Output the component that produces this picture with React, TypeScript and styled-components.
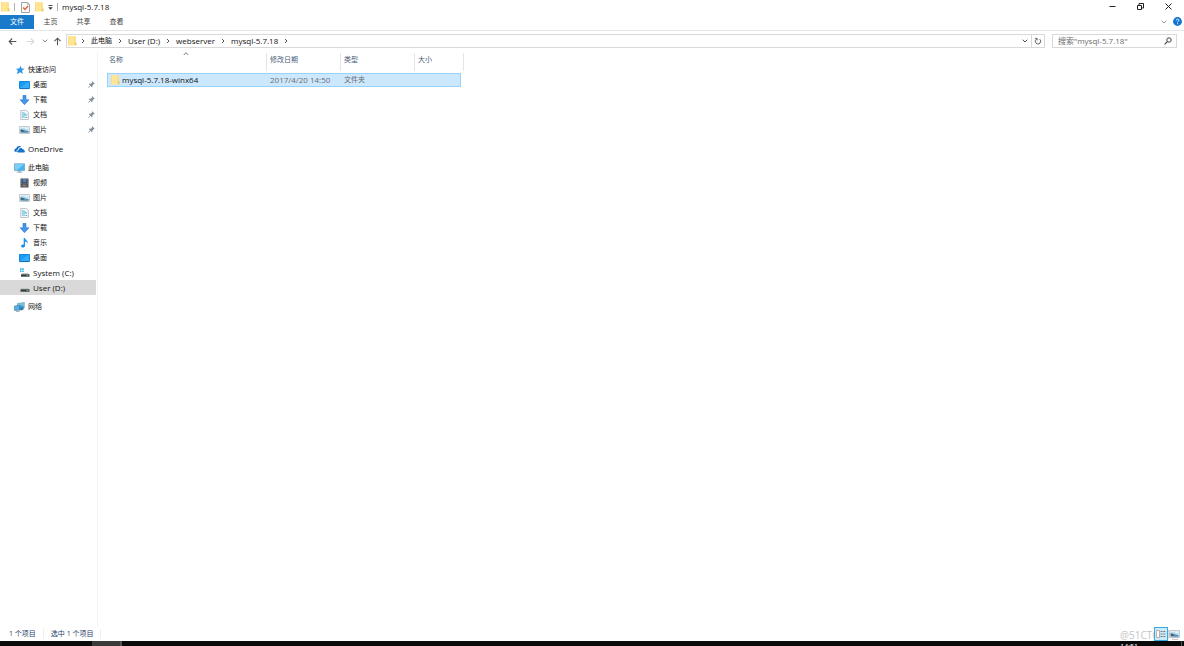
import React from "react";
import styled, { createGlobalStyle, css } from "styled-components";

const GlobalStyle = createGlobalStyle`
  *, *::before, *::after { box-sizing: border-box; }
  body { margin: 0; background: #fff; }
  button, input { font: inherit; color: inherit; }
  svg { display: block; flex: none; }
`;

const Window = styled.div`
  display: flex;
  flex-direction: column;
  min-height: 100vh;
  overflow: hidden;
  background: #fff;
  color: #111;
  font: 7px/14px "Open Sans", "Noto Sans CJK SC", sans-serif;
`;

const PlainButton = styled.button`
  display: flex;
  align-items: center;
  justify-content: center;
  padding: 0;
  border: 0;
  background: none;
  white-space: nowrap;
`;

/* Title bar */
const TitleBar = styled.header`
  display: flex;
  justify-content: space-between;
  height: 14px;
`;

const QuickTools = styled.div`
  display: flex;
  align-items: center;
`;

const ToolButton = styled(PlainButton)<{ $width: number }>`
  width: ${(p) => p.$width}px;
  height: 14px;
`;

const Separator = styled.span`
  width: 1px;
  height: 8px;
  background: #b0b0b0;
`;

const WindowTitle = styled.h1`
  margin: 0 0 0 4px;
  font-size: 8px;
  font-weight: 400;
  line-height: 14px;
`;

const CaptionButtons = styled.div`
  display: flex;
  padding-right: 2px;
`;

const CaptionButton = styled(PlainButton)`
  width: 28px;
  height: 13px;
`;

/* Ribbon tabs */
const Ribbon = styled.nav`
  display: flex;
  align-items: center;
  height: 17px;
  padding-bottom: 1px;
  border-bottom: 1px solid #e6e6e6;
`;

const Tab = styled(PlainButton)<{ $active?: boolean }>`
  width: 33px;
  height: 14px;
  color: #444;
  ${(p) =>
    p.$active &&
    css`
      width: 34px;
      background: #1979ca;
      color: #fff;
    `}
`;

const RibbonEnd = styled.div`
  display: flex;
  align-items: center;
  gap: 6px;
  margin-left: auto;
  padding-right: 2px;
`;

/* Address row */
const AddressRow = styled.div`
  display: flex;
  align-items: center;
  height: 20px;
  padding: 0 7px 0 4px;
`;

const AddressBox = styled.div`
  display: flex;
  flex: 1;
  align-items: center;
  height: 14px;
  margin: 0 7px 0 1px;
  padding-left: 1px;
  border: 1px solid #d9d9d9;
`;

const Crumbs = styled.ol`
  display: flex;
  flex: 1;
  align-items: center;
  margin: 0;
  padding: 0 0 0 3px;
  list-style: none;
`;

const Crumb = styled.li`
  display: flex;
  align-items: center;
  gap: 5px;
  margin-right: 5px;
`;

const CrumbLink = styled.a<{ $latin: boolean }>`
  color: #111;
  font-size: ${(p) => (p.$latin ? 8 : 7)}px;
  text-decoration: none;
`;

const RefreshButton = styled(PlainButton)`
  width: 13px;
  height: 12px;
  border-left: 1px solid #d9d9d9;
`;

const SearchForm = styled.form`
  display: flex;
  align-items: center;
  width: 125px;
  height: 14px;
  padding: 0 4px 0 5px;
  border: 1px solid #d9d9d9;
`;

const SearchInput = styled.input`
  flex: 1;
  min-width: 0;
  height: 12px;
  padding: 0;
  border: 0;
  outline: 0;
  background: none;
  font-size: 8px;
  &::placeholder { color: #6d6d6d; opacity: 1; }
`;

/* Body */
const Body = styled.div`
  display: flex;
  flex: 1;
`;

const Sidebar = styled.aside`
  width: 98px;
  padding: 11px 1px 0 0;
  border-right: 1px solid #f5f5f5;
`;

const TreeGroup = styled.ul`
  margin: 0 0 4px;
  padding: 0;
  list-style: none;
`;

const TreeItem = styled.a<{ $child?: boolean; $selected?: boolean; $latin?: boolean }>`
  display: flex;
  align-items: center;
  gap: 3px;
  height: 15px;
  padding: 0 0 0 ${(p) => (p.$child ? 19 : 14)}px;
  background: ${(p) => (p.$selected ? "#d9d9d9" : "transparent")};
  color: #111;
  font-size: ${(p) => (p.$latin ? 8 : 7)}px;
  text-decoration: none;
  white-space: nowrap;
`;

const PinSlot = styled.span`
  margin-left: auto;
  padding-right: 1px;
`;

const Content = styled.main`
  flex: 1;
  padding-left: 9px;
`;

const FileTable = styled.table`
  width: 357px;
  table-layout: fixed;
  border-collapse: separate;
  border-spacing: 0 2px;
`;

const Column = styled.col<{ $width: number }>`
  width: ${(p) => p.$width}px;
`;

const HeadCell = styled.th`
  position: relative;
  height: 18px;
  padding: 0 0 0 3px;
  border-right: 1px solid #e5e5e5;
  color: #4c607a;
  font-weight: 400;
  line-height: 14px;
  text-align: left;
  vertical-align: top;
  &:first-child { padding-left: 2px; }
`;

const SortMark = styled.span`
  position: absolute;
  top: -2px;
  left: 0;
  right: 2px;
  display: flex;
  justify-content: center;
`;

const Cell = styled.td`
  height: 14px;
  padding: 0 0 0 3px;
  border: solid #99d1ff;
  border-width: 1px 0;
  background: #cce8ff;
  color: #6d6d6d;
  line-height: 12px;
  white-space: nowrap;
  &:first-child { border-left-width: 1px; }
  &:last-child { border-right-width: 1px; }
`;

const DateText = styled.time`
  display: block;
  font-size: 8px;
`;

const FileName = styled.span`
  display: flex;
  align-items: center;
  gap: 2px;
  color: #111;
  font-size: 8px;
`;

/* Status bar */
const StatusBar = styled.footer`
  display: flex;
  align-items: center;
  height: 14px;
  padding: 0 4px 0 9px;
  color: #26406b;
`;

const StatusText = styled.span`
  padding-right: 7px;
  margin-right: 7px;
  border-right: 1px solid #eee;
  line-height: 10px;
`;

const ViewSwitch = styled.div`
  position: relative;
  display: flex;
  gap: 1px;
  margin-left: auto;
`;

const ViewButton = styled(PlainButton)<{ $active?: boolean }>`
  position: relative;
  width: ${(p) => (p.$active ? 14 : 11)}px;
  height: 14px;
  border: ${(p) => (p.$active ? "1px solid #3aa7df" : "0")};
  background: ${(p) => (p.$active ? "#cdeaf8" : "none")};
`;

const Watermark = styled.span`
  position: absolute;
  right: 0;
  top: 1px;
  color: #c4c4c4;
  font: 10px/14px "Open Sans", "Noto Sans CJK SC", sans-serif;
  white-space: nowrap;
`;

const Taskbar = styled.div`
  display: flex;
  height: 5px;
  padding: 0 2px 0 92px;
  overflow: hidden;
  background: #0a0a0a;
`;

const TaskButton = styled(PlainButton)`
  width: 30px;
  height: 5px;
  border-right: 2px solid #555;
  background: #3a3a3a;
`;

const Clock = styled.time`
  margin-left: auto;
  padding: 0 43px 0 0;
  border-right: 1px solid #555;
  color: #fff;
  line-height: 11px;
`;

/* Drawings */
const FolderIcon = () => (
  <svg width="9" height="10" viewBox="0 0 9 10">
    <path d="M0 0h6.500l1 1v8.500H0z" fill="#ffe594" />
    <path d="M6.500.5h1.200v6L6.500 9z" fill="#f8d97c" />
    <path d="M6.800 6.500h1.700v2.800H6.800z" fill="#efc75d" />
    <path d="M0 0v9.500" stroke="#f4d375" />
  </svg>
);

const PropertiesIcon = () => (
  <svg width="9" height="11" viewBox="0 0 9 11" fill="none">
    <path d="M.5.5h6l2 2v8h-8z" fill="#fafafa" stroke="#a2a2a2" />
    <path d="M6.500.5v2h2" stroke="#a2a2a2" strokeWidth=".7" />
    <path d="M2.200 5.500l1.700 2L7 4" stroke="#e0602f" strokeWidth="1.300" />
  </svg>
);

const CustomizeIcon = () => (
  <svg width="5" height="6" viewBox="0 0 5 6">
    <path d="M.5 1.500h4" stroke="#333" strokeWidth=".9" />
    <path d="M.3 3.300h4.400L2.500 5.700z" fill="#333" />
  </svg>
);

type ChevronDir = "down" | "up" | "right";
const chevrons: Record<ChevronDir, string> = {
  down: "M.7 1.700L3 4l2.300-2.300",
  up: "M.7 4L3 1.700 5.300 4",
  right: "M2 1l2 2-2 2",
};
const Chevron = ({ dir, color = "#555" }: { dir: ChevronDir; color?: string }) => (
  <svg width="6" height="6" viewBox="0 0 6 6" fill="none">
    <path d={chevrons[dir]} stroke={color} strokeWidth="1" />
  </svg>
);

const Arrow = ({ dir, color = "#555" }: { dir: "left" | "right" | "up"; color?: string }) => (
  <svg width="9" height="9" viewBox="0 0 9 9" fill="none">
    <path
      d="M8.300 4.500H1.200M4.200 1.500l-3 3 3 3"
      stroke={color}
      strokeWidth="1.100"
      transform={dir === "left" ? undefined : `rotate(${dir === "up" ? 90 : 180} 4.500 4.500)`}
    />
  </svg>
);

const MinimizeIcon = () => (
  <svg width="7" height="7" viewBox="0 0 7 7"><path d="M.5 3.500h6" stroke="#222" /></svg>
);
const RestoreIcon = () => (
  <svg width="7" height="7" viewBox="0 0 7 7" fill="none" stroke="#222">
    <path d="M.5 2.500h4v4h-4z" />
    <path d="M2 2V.5h4.500V5H5" />
  </svg>
);
const CloseIcon = () => (
  <svg width="7" height="7" viewBox="0 0 7 7"><path d="M.5.5l6 6M6.500.5l-6 6" stroke="#222" /></svg>
);

const HelpIcon = () => (
  <svg width="9" height="9" viewBox="0 0 9 9" fill="none">
    <circle cx="4.500" cy="4.500" r="4.400" fill="#0f73cf" />
    <path d="M3.200 3.500c0-1.900 2.700-1.700 2.700-.2 0 1-1.300 1-1.300 2.100" stroke="#fff" strokeWidth=".9" />
    <path d="M4.100 6.300h1v.9h-1z" fill="#fff" />
  </svg>
);

const RefreshIcon = () => (
  <svg width="8" height="8" viewBox="0 0 8 8" fill="none" stroke="#555" strokeWidth=".9">
    <path d="M5.600 2.100A2.700 2.700 0 1 1 2.600 2" />
    <path d="M1.200 1.400h2v2" />
  </svg>
);

const SearchIcon = () => (
  <svg width="8" height="8" viewBox="0 0 8 8" fill="none" stroke="#444">
    <circle cx="5" cy="3" r="2.200" />
    <path d="M3.400 4.600L.6 7.400" strokeWidth="1.200" />
  </svg>
);

const PinIcon = () => (
  <svg width="7" height="7" viewBox="0 0 7 7">
    <path d="M4.200.3l2.500 2.500-.7.500-.4-.1-1.200 1.300.1 1.300-.6.500L.9 3.200l.6-.6 1.400.1L4 1.400 3.800.8z" fill="#838d97" />
    <path d="M2.500 4.500L.4 6.700" stroke="#838d97" strokeWidth=".8" />
  </svg>
);

type IconName =
  | "star" | "desktop" | "download" | "document" | "picture" | "cloud"
  | "computer" | "video" | "music" | "system" | "drive" | "network";

const drawings: Record<IconName, React.ReactNode> = {
  star: (
    <path d="M6.900.8l.6 2.600 3.200.3-2.600 1.900.7 3.300-2.500-1.600-3.500 2 1.100-3.700L2 3.700l3.100-.3z" fill="#2e97e5" />
  ),
  desktop: (
    <>
      <path d="M.5 1.500h10v7H.5z" fill="#189cf4" stroke="#1488dc" />
      <path d="M1 8l8-6h1v6z" fill="#36adfa" />
      <path d="M1 8.600h9" stroke="#1468ae" strokeWidth=".7" />
    </>
  ),
  download: (
    <path d="M4 .3h3v4.500h3L5.500 9.700 1 4.800h3z" fill="#4596e6" stroke="#2b7bca" strokeWidth=".6" />
  ),
  document: (
    <>
      <path d="M1.800.4h5.500l2 2v7.200H1.800z" fill="#f5f9fb" stroke="#a0a9ae" strokeWidth=".7" />
      <path d="M3 3h2.500M3 5h2M6.500 5H8M3 7h3M6.500 7.500H8" stroke="#4eacd5" />
      <path d="M5 3.500h2v2H5z" fill="#70c7e7" />
    </>
  ),
  picture: (
    <>
      <path d="M.5 1.500h10v7H.5z" fill="#fff" stroke="#b7bcc0" strokeWidth=".8" />
      <path d="M1.500 2.500h8v5h-8z" fill="#b5dcf3" />
      <path d="M1.500 4.300c2 0 3 1.200 4.500 1.200l3.500.8v1.200h-8z" fill="#41687c" />
      <path d="M5 6.300h4.500v1.200H4z" fill="#5aa0cc" />
      <path d="M6.500 3h2v1h-2z" fill="#fff" />
    </>
  ),
  cloud: (
    <>
      <path d="M.6 7.500C-.2 5.500 1.500 4.600 2.300 4.600 2.600 2 5.600.9 7.500 3 5 2.800 4 4.300 3.900 5.500 2.500 5.700 2.300 7 2.800 7.900z" fill="#0f68bd" />
      <path d="M4 8.500C2.600 8.300 2.900 6.200 4.600 6.300 4.700 3.800 7.900 3.300 8.600 5.300c1.700-.1 1.900 1.200 1.700 1.500 1 .4.700 1.700-.3 1.700z" fill="#1274ce" />
    </>
  ),
  computer: (
    <>
      <path d="M.5.800h10v6.700H.5z" fill="#45b5f3" stroke="#6f9cb8" strokeWidth=".7" />
      <path d="M1 1.300h9L3 7H1z" fill="#7bd0fa" />
      <path d="M4.500 7.800h2v1h-2zM2.500 8.800h6v.7h-6z" fill="#7fa5bb" />
    </>
  ),
  video: (
    <>
      <path d="M1.500.5h8v9h-8z" fill="#3b4048" />
      <path d="M3.500 1h4v3.500h-4z" fill="#5a82ae" />
      <path d="M3.500 5.300h4V9h-4z" fill="#8a6f52" />
      <path d="M3.500 3h2v1.500h-2zM5.500 5.300h2V7h-2z" fill="#3c67b2" />
      <path d="M2.300.8v9M8.700.8v9" stroke="#b9bdc2" strokeWidth=".7" strokeDasharray="1 1" />
    </>
  ),
  music: (
    <>
      <path d="M5.300 0v8" stroke="#118ae5" strokeWidth="1.200" />
      <path d="M5 0h1c.2 2 3 2.500 2.800 5.800C8.200 4 7 3.600 5.500 3.400z" fill="#1593ee" />
      <ellipse cx="4" cy="8" rx="1.900" ry="1.500" fill="#118ae5" />
    </>
  ),
  system: (
    <>
      <path d="M1 .3h1.600v1.600H1zM3.200.3h1.600v1.600H3.200zM1 2.500h1.600v1.600H1zM3.200 2.500h1.600v1.600H3.200z" fill="#35b4ee" />
      <path d="M3 5h6.200l1 1.500H2z" fill="#c6cbce" />
      <path d="M2 6.300h8.500v2.400H2z" fill="#363d3d" />
      <path d="M7.700 7h1.600v.9H7.700z" fill="#64d67b" />
    </>
  ),
  drive: (
    <>
      <path d="M2.300 5h6.900l1 1.500H1.500z" fill="#c1c6c9" />
      <path d="M1.500 6.300h9v2.400h-9z" fill="#363d3d" />
      <path d="M7.700 7h1.600v.9H7.700z" fill="#64d67b" />
    </>
  ),
  network: (
    <>
      <path d="M3.500 1.500L10.300.5v5.200l-6.800 1.500z" fill="#7cc4e4" stroke="#5a93b2" strokeWidth=".6" />
      <path d="M.5 4l5.700-.8v4.600L.5 8.600z" fill="#53b2ea" stroke="#477c9e" strokeWidth=".6" />
      <circle cx="7.400" cy="6" r="2.400" fill="#2c80b6" />
      <path d="M6.300 5.200c1-1 2-.9 2.500 0" stroke="#7ec3e6" strokeWidth=".7" />
      <path d="M2 9.300l4-.3" stroke="#6d8290" strokeWidth=".8" />
    </>
  ),
};

const TreeIcon = ({ name }: { name: IconName }) => (
  <svg width="11" height="10" viewBox="0 0 11 10" fill="none">{drawings[name]}</svg>
);

const DetailsIcon = () => (
  <svg width="10" height="10" viewBox="0 0 10 10" fill="none">
    <path d="M.5 1.500h3v7h-3z" fill="#fff" stroke="#b48b86" strokeWidth=".7" />
    <path d="M4.500 2.500h2M7.300 2.500h2M4.500 5h2M7.300 5h2M4.500 7.500h2M7.300 7.500h2" stroke="#6b7d8c" />
  </svg>
);

/* Data */
interface TreeNode {
  label: string;
  icon: IconName;
  child?: boolean;
  pinned?: boolean;
  selected?: boolean;
}

const tree: TreeNode[][] = [
  [
    { label: "快速访问", icon: "star" },
    { label: "桌面", icon: "desktop", child: true, pinned: true },
    { label: "下载", icon: "download", child: true, pinned: true },
    { label: "文档", icon: "document", child: true, pinned: true },
    { label: "图片", icon: "picture", child: true, pinned: true },
  ],
  [{ label: "OneDrive", icon: "cloud" }],
  [
    { label: "此电脑", icon: "computer" },
    { label: "视频", icon: "video", child: true },
    { label: "图片", icon: "picture", child: true },
    { label: "文档", icon: "document", child: true },
    { label: "下载", icon: "download", child: true },
    { label: "音乐", icon: "music", child: true },
    { label: "桌面", icon: "desktop", child: true },
    { label: "System (C:)", icon: "system", child: true },
    { label: "User (D:)", icon: "drive", child: true, selected: true },
  ],
  [{ label: "网络", icon: "network" }],
];

const crumbs = ["此电脑", "User (D:)", "webserver", "mysql-5.7.18"];

const headings = ["名称", "修改日期", "类型", "大小"];

/* The last column is the margin between the row's end and the header's end. */
const columnWidths = [160, 74, 74, 46, 3];

const isLatin = (label: string) => /^[\x20-\x7e]+$/.test(label);

export default function App() {
  return (
    <>
      <GlobalStyle />
      <Window lang="zh-CN">
        <TitleBar>
          <QuickTools>
            <ToolButton $width={11} aria-label="窗口菜单"><FolderIcon /></ToolButton>
            <ToolButton as="span" $width={3} />
            <Separator />
            <ToolButton $width={20} aria-label="属性"><PropertiesIcon /></ToolButton>
            <ToolButton $width={9} aria-label="新建文件夹"><FolderIcon /></ToolButton>
            <ToolButton $width={13} aria-label="自定义快速访问工具栏"><CustomizeIcon /></ToolButton>
            <Separator />
            <WindowTitle>mysql-5.7.18</WindowTitle>
          </QuickTools>
          <CaptionButtons>
            <CaptionButton aria-label="最小化"><MinimizeIcon /></CaptionButton>
            <CaptionButton aria-label="还原"><RestoreIcon /></CaptionButton>
            <CaptionButton aria-label="关闭"><CloseIcon /></CaptionButton>
          </CaptionButtons>
        </TitleBar>

        <Ribbon>
          <Tab $active>文件</Tab>
          <Tab>主页</Tab>
          <Tab>共享</Tab>
          <Tab>查看</Tab>
          <RibbonEnd>
            <PlainButton aria-label="展开功能区"><Chevron dir="down" color="#999" /></PlainButton>
            <PlainButton aria-label="帮助"><HelpIcon /></PlainButton>
          </RibbonEnd>
        </Ribbon>

        <AddressRow>
          <ToolButton $width={16} aria-label="后退"><Arrow dir="left" /></ToolButton>
          <ToolButton $width={20} aria-label="前进"><Arrow dir="right" color="#d8d8d8" /></ToolButton>
          <ToolButton $width={9} aria-label="最近浏览的位置"><Chevron dir="down" color="#888" /></ToolButton>
          <ToolButton $width={16} aria-label="上移"><Arrow dir="up" /></ToolButton>
          <AddressBox>
            <FolderIcon />
            <Crumbs>
              <Crumb><Chevron dir="right" /></Crumb>
              {crumbs.map((label) => (
                <Crumb key={label}>
                  <CrumbLink href="#" $latin={isLatin(label)}>{label}</CrumbLink>
                  <Chevron dir="right" />
                </Crumb>
              ))}
            </Crumbs>
            <ToolButton $width={12} aria-label="以前的位置"><Chevron dir="down" /></ToolButton>
            <RefreshButton aria-label="刷新"><RefreshIcon /></RefreshButton>
          </AddressBox>
          <SearchForm role="search">
            <SearchInput type="text" aria-label="搜索" placeholder={'搜索"mysql-5.7.18"'} />
            <PlainButton type="button" aria-label="开始搜索"><SearchIcon /></PlainButton>
          </SearchForm>
        </AddressRow>

        <Body>
          <Sidebar>
            {tree.map((group) => (
              <TreeGroup key={group[0].label}>
                {group.map((node) => (
                  <li key={node.label}>
                    <TreeItem
                      href="#"
                      $child={node.child}
                      $selected={node.selected}
                      $latin={isLatin(node.label)}
                    >
                      <TreeIcon name={node.icon} />
                      {node.label}
                      {node.pinned && <PinSlot><PinIcon /></PinSlot>}
                    </TreeItem>
                  </li>
                ))}
              </TreeGroup>
            ))}
          </Sidebar>
          <Content>
            <FileTable>
              <colgroup>
                {columnWidths.map((width, index) => <Column key={index} $width={width} />)}
              </colgroup>
              <thead>
                <tr>
                  {headings.map((label, index) => (
                    <HeadCell key={label} scope="col" colSpan={index === 3 ? 2 : 1}>
                      {label}
                      {index === 0 && <SortMark><Chevron dir="up" color="#777" /></SortMark>}
                    </HeadCell>
                  ))}
                </tr>
              </thead>
              <tbody>
                <tr>
                  <Cell><FileName><FolderIcon />mysql-5.7.18-winx64</FileName></Cell>
                  <Cell><DateText>2017/4/20 14:50</DateText></Cell>
                  <Cell>文件夹</Cell>
                  <Cell />
                </tr>
              </tbody>
            </FileTable>
          </Content>
        </Body>

        <StatusBar>
          <StatusText>1 个项目</StatusText>
          <StatusText>选中 1 个项目</StatusText>
          <ViewSwitch>
            <Watermark>@51CTO博客</Watermark>
            <ViewButton $active aria-label="详细信息"><DetailsIcon /></ViewButton>
            <ViewButton aria-label="大图标"><TreeIcon name="picture" /></ViewButton>
          </ViewSwitch>
        </StatusBar>
        <Taskbar>
          <TaskButton aria-label="文件资源管理器" />
          <Clock>14:51</Clock>
        </Taskbar>
      </Window>
    </>
  );
}
